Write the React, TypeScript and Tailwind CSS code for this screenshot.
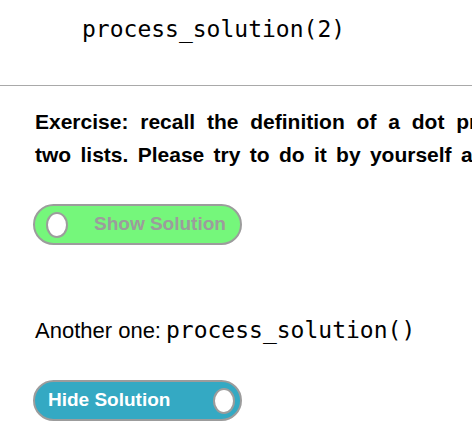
import React from "react";

const mono = { fontFamily: '"DejaVu Sans Mono", monospace' };

function Switch({ on }: { on: boolean }) {
  if (!on) {
    return (
      <div className="ml-[33px] flex h-[41px] w-[209px] items-center rounded-full border-2 border-[#9c9c9c] bg-[#75f77b]">
        <div className="ml-[11px] h-[26px] w-[22px] rounded-[50%] border-2 border-[#9c9c9c] bg-white" />
        <span className="ml-[26px] font-['Liberation_Sans',sans-serif] text-[19px] font-bold text-[#9c9c9c]">
          Show Solution
        </span>
      </div>
    );
  }
  return (
    <div className="ml-[33px] flex h-[41px] w-[209px] items-center rounded-full border-2 border-[#9c9c9c] bg-[#34a9c3]">
      <span className="ml-[13px] font-['Liberation_Sans',sans-serif] text-[19px] font-bold text-white">
        Hide Solution
      </span>
      <div className="ml-auto mr-[5px] h-[26px] w-[22px] rounded-[50%] border-2 border-[#9c9c9c] bg-white" />
    </div>
  );
}

export default function App() {
  return (
    <div className="relative h-[443px] w-[472px] overflow-hidden bg-white text-black">
      <div className="h-[85px] pl-[82px] pt-[16px] text-[23px] leading-[27px]" style={mono}>
        process_solution(2)
      </div>
      <div className="h-px w-full bg-[#a9a9a9]" />
      <div className="pl-[35px] pt-[19px] font-['Liberation_Sans',sans-serif] text-[21px] font-bold leading-[33px]">
        <div className="whitespace-nowrap [word-spacing:6px]">
          Exercise: recall the definition of a dot product of
        </div>
        <div className="whitespace-nowrap [word-spacing:3.5px]">
          two lists. Please try to do it by yourself and then check the solution.
        </div>
      </div>
      <div className="pt-[33px]">
        <Switch on={false} />
      </div>
      <div className="flex items-baseline pl-[35px] pt-[70px] font-['Liberation_Sans',sans-serif] text-[22px] leading-[30px]">
        <span>Another one:</span>
        <span className="ml-[5px] text-[23px]" style={mono}>process_solution()</span>
      </div>
      <div className="pt-[34px]">
        <Switch on={true} />
      </div>
    </div>
  );
}
